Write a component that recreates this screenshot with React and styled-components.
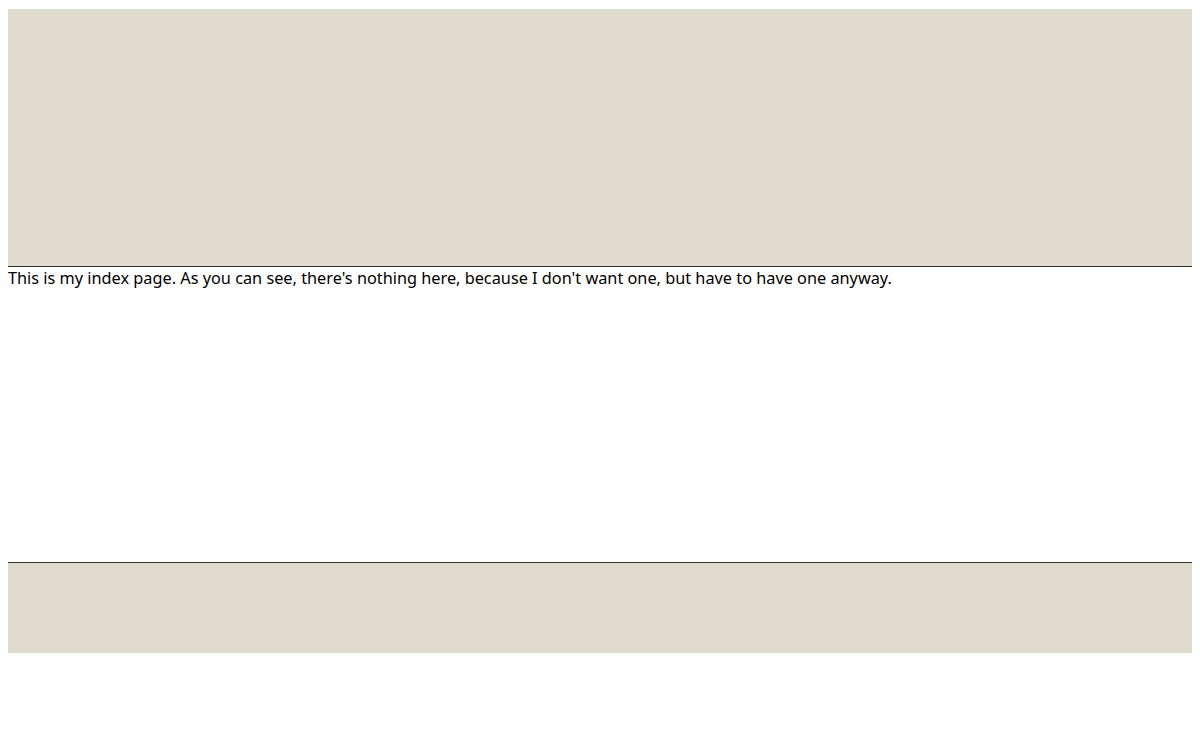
import React from 'react'
import styled, { createGlobalStyle } from 'styled-components'

const GlobalStyle = createGlobalStyle`
  body {
    margin: 8px;
    font-family: "Noto Sans", "Open Sans", sans-serif;
    font-size: 16.3px;
    color: #000;
  }
`

const Header = styled.header`
  margin-top: 1px;
  height: 257px;
  background: #dfdbcf;
  border-bottom: 1px solid #333;
`

const Main = styled.main`
  height: 295px;
  line-height: 22px;
`

const Footer = styled.footer`
  height: 90px;
  background: #dfdbcf;
  border-top: 1px solid #333;
`

const App = () => {
    return (
        <>
            <GlobalStyle />
            <Header />
            <Main>
                This is my index page. As you can see, there's nothing here, because I don't want one, but have to have one anyway.
            </Main>
            <Footer />
        </>
    )
}

export default App
